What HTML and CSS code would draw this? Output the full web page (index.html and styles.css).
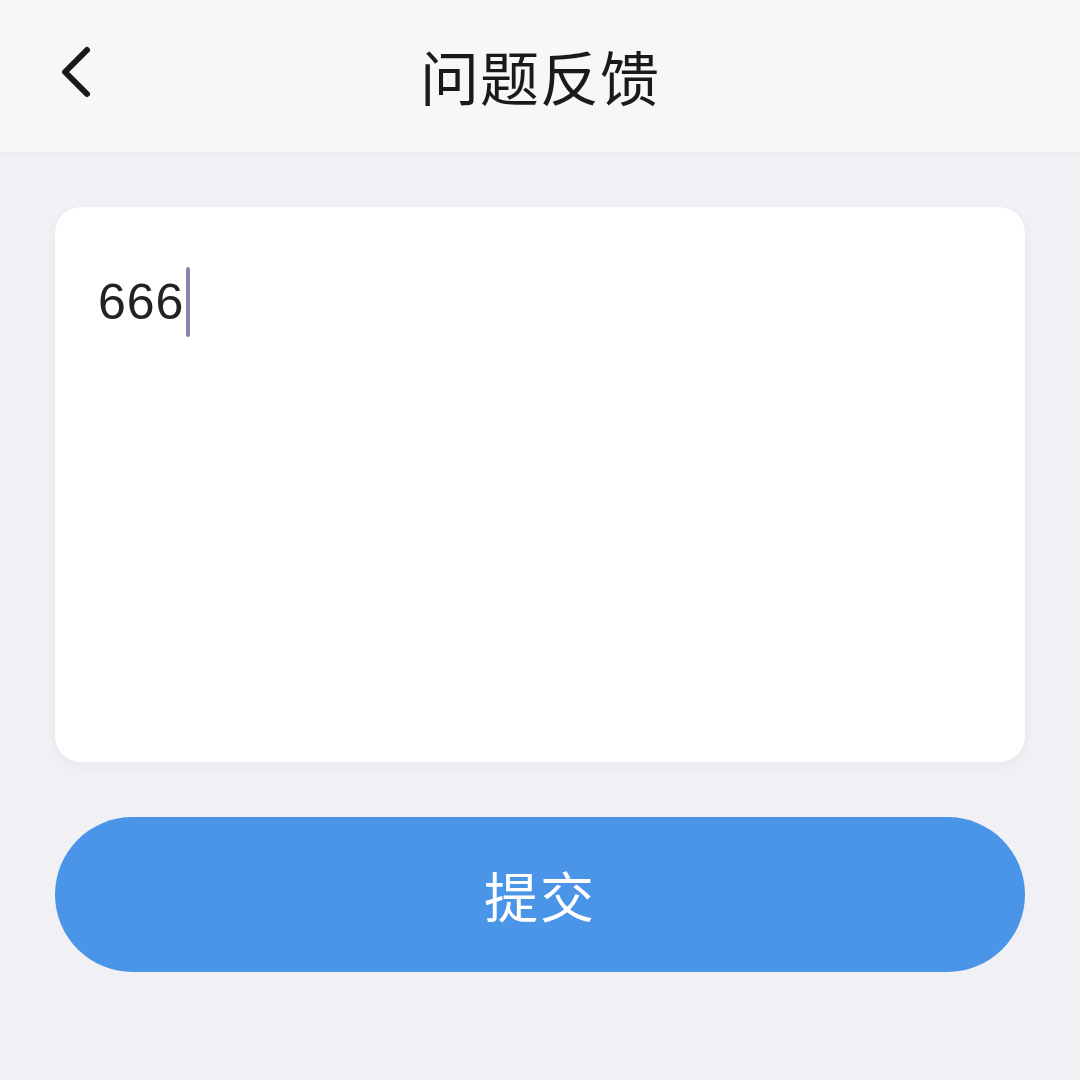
FILE: index.html
```html
<!DOCTYPE html>
<html lang="zh">
<head>
<meta charset="utf-8">
<link rel="stylesheet" href="styles.css">
</head>
<body>
<div class="page">
  <header class="nav">
    <button class="back" aria-label="返回">
      <svg width="40" height="60" viewBox="0 0 40 60"><path d="M30 6 L8 28 L30 50" fill="none" stroke="#1a1a1a" stroke-width="6" stroke-linecap="round" stroke-linejoin="round"/></svg>
    </button>
    <h1 class="title">问题反馈</h1>
  </header>
  <main class="content">
    <div class="card">
      <div class="input"><span class="text">666</span><span class="caret"></span></div>
    </div>
    <button class="submit">提交</button>
  </main>
</div>
</body>
</html>
```
FILE: styles.css
```css
html, body {
  margin: 0;
  padding: 0;
}
body {
  width: 1080px;
  height: 1080px;
  background: #f0f0f5;
  font-family: "Noto Sans CJK SC", "Noto Sans", sans-serif;
  overflow: hidden;
}
.page {
  display: flex;
  flex-direction: column;
  height: 100%;
}
.nav {
  position: relative;
  height: 152px;
  background: #f9f6fa;
  display: flex;
  align-items: center;
  justify-content: center;
  box-shadow: 0 2px 8px rgba(0, 0, 0, 0.025);
}
.back {
  position: absolute;
  left: 57px;
  top: 44px;
  border: 0;
  background: none;
  padding: 0;
  width: 40px;
  height: 60px;
  display: flex;
}
.title {
  margin: 0;
  margin-top: -2px;
  font-size: 59px;
  font-weight: 400;
  color: #1a1a1a;
  letter-spacing: 1px;
  line-height: 1;
}
.content {
  padding: 55px 55px 0;
  display: flex;
  flex-direction: column;
  gap: 55px;
}
.card {
  height: 555px;
  background: #ffffff;
  border-radius: 26px;
  box-shadow: 0 4px 14px rgba(0, 0, 0, 0.04);
  padding: 60px 43px;
  box-sizing: border-box;
}
.input {
  display: flex;
  align-items: center;
  height: 70px;
}
.text {
  font-family: "Liberation Sans", Arial, sans-serif;
  font-size: 50px;
  color: #222222;
  letter-spacing: 1px;
}
.caret {
  display: inline-block;
  width: 4px;
  height: 70px;
  margin-left: 2px;
  background: #8a85ad;
  border-radius: 2px;
}
.submit {
  height: 155px;
  border: 0;
  border-radius: 78px;
  background: #4a95e8;
  color: #ffffff;
  font-family: "Noto Sans CJK SC", sans-serif;
  font-size: 54px;
  font-weight: 400;
  letter-spacing: 2px;
  padding: 0;
}
```
